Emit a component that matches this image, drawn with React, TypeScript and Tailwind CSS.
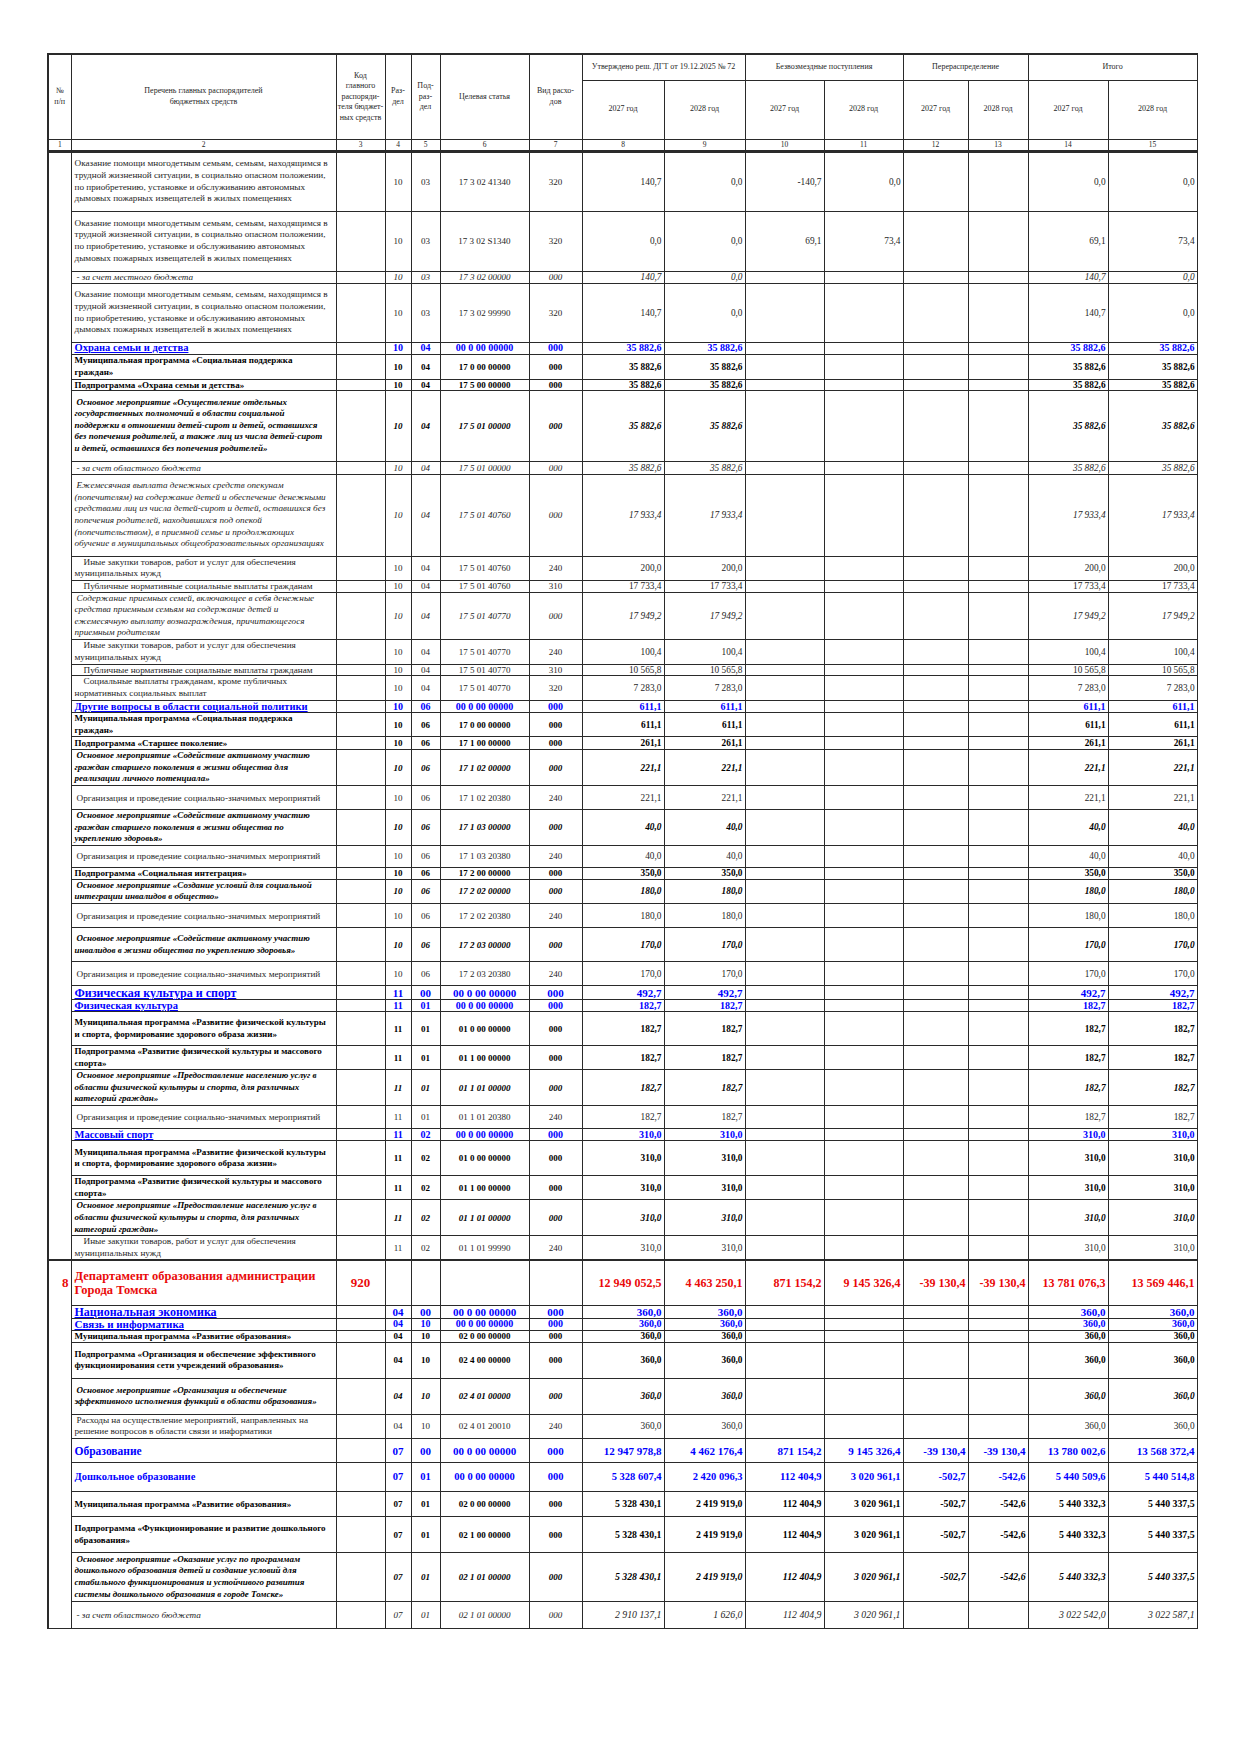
type Kind = "normal" | "sub" | "italic" | "main" | "prog" | "section" | "dept";

interface Row {
  h: string;
  kind: Kind;
  lines: string[];
  codes: string[];
  vals: string[];
  ind?: 0 | 1 | 2;
  u?: boolean;
  ts?: string;
  cs?: string;
  vs?: string;
}

const same = (v: string) => [v, v, "", "", "", "", v, v];
const four = (a: string, b: string, c: string, d: string) => [a, b, "", "", "", "", c, d];

const OKAZ = [
  "Оказание помощи многодетным семьям, семьям, находящимся в",
  "трудной жизненной ситуации, в социально опасном положении,",
  "по приобретению, установке и обслуживанию автономных",
  "дымовых пожарных извещателей в жилых помещениях",
];
const ZAKUPKI = ["Иные закупки товаров, работ и услуг для обеспечения", "муниципальных нужд"];
const PUBL = ["Публичные нормативные социальные выплаты гражданам"];
const ORG = ["Организация и проведение социально-значимых мероприятий"];
const MP_SOC = ["Муниципальная программа «Социальная поддержка", "граждан»"];
const MP_FIZ = ["Муниципальная программа «Развитие физической культуры", "и спорта, формирование здорового образа жизни»"];
const PP_FIZ = ["Подпрограмма «Развитие физической культуры и массового", "спорта»"];
const OM_FIZ = [
  "Основное мероприятие «Предоставление населению услуг в",
  "области физической культуры и спорта, для различных",
  "категорий граждан»",
];
const DEP_MAIN = ["5 328 430,1", "2 419 919,0", "112 404,9", "3 020 961,1", "-502,7", "-542,6", "5 440 332,3", "5 440 337,5"];

// высоты строк сняты с макета
const rows: Row[] = [
  { h: "h-[60px]", kind: "normal", lines: OKAZ, codes: ["10", "03", "17 3 02 41340", "320"], vals: ["140,7", "0,0", "-140,7", "0,0", "", "", "0,0", "0,0"] },
  { h: "h-[60px]", kind: "normal", lines: OKAZ, codes: ["10", "03", "17 3 02 S1340", "320"], vals: ["0,0", "0,0", "69,1", "73,4", "", "", "69,1", "73,4"] },
  { h: "h-[12px]", kind: "sub", lines: ["- за счет местного бюджета"], ind: 1, codes: ["10", "03", "17 3 02 00000", "000"], vals: four("140,7", "0,0", "140,7", "0,0") },
  { h: "h-[59px]", kind: "normal", lines: OKAZ, codes: ["10", "03", "17 3 02 99990", "320"], vals: four("140,7", "0,0", "140,7", "0,0") },
  { h: "h-[12px]", kind: "section", u: true, lines: ["Охрана семьи и детства"], codes: ["10", "04", "00 0 00 00000", "000"], vals: same("35 882,6") },
  { h: "h-[25px]", kind: "prog", lines: MP_SOC, codes: ["10", "04", "17 0 00 00000", "000"], vals: same("35 882,6") },
  { h: "h-[11px]", kind: "prog", lines: ["Подпрограмма «Охрана семьи и детства»"], codes: ["10", "04", "17 5 00 00000", "000"], vals: same("35 882,6") },
  {
    h: "h-[71px]",
    kind: "main",
    ind: 1,
    lines: [
      "Основное мероприятие «Осуществление отдельных",
      "государственных полномочий в области социальной",
      "поддержки в отношении детей-сирот и детей, оставшихся",
      "без попечения родителей, а также лиц из числа детей-сирот",
      "и детей, оставшихся без попечения родителей»",
    ],
    codes: ["10", "04", "17 5 01 00000", "000"],
    vals: same("35 882,6"),
  },
  { h: "h-[13px]", kind: "sub", ind: 1, lines: ["- за счет областного бюджета"], codes: ["10", "04", "17 5 01 00000", "000"], vals: same("35 882,6") },
  {
    h: "h-[82px]",
    kind: "italic",
    ind: 1,
    lines: [
      "Ежемесячная выплата денежных средств опекунам",
      "(попечителям) на содержание детей и обеспечение денежными",
      "средствами лиц из числа детей-сирот и детей, оставшихся без",
      "попечения родителей, находившихся под опекой",
      "(попечительством), в приемной семье и продолжающих",
      "обучение в муниципальных общеобразовательных организациях",
    ],
    codes: ["10", "04", "17 5 01 40760", "000"],
    vals: same("17 933,4"),
  },
  { h: "h-[24px]", kind: "normal", ind: 2, lines: ZAKUPKI, codes: ["10", "04", "17 5 01 40760", "240"], vals: same("200,0") },
  { h: "h-[12px]", kind: "normal", ind: 2, lines: PUBL, codes: ["10", "04", "17 5 01 40760", "310"], vals: same("17 733,4") },
  {
    h: "h-[47px]",
    kind: "italic",
    ind: 1,
    lines: [
      "Содержание приемных семей, включающее в себя денежные",
      "средства приемным семьям на содержание детей и",
      "ежемесячную выплату вознаграждения, причитающегося",
      "приемным родителям",
    ],
    codes: ["10", "04", "17 5 01 40770", "000"],
    vals: same("17 949,2"),
  },
  { h: "h-[25px]", kind: "normal", ind: 2, lines: ZAKUPKI, codes: ["10", "04", "17 5 01 40770", "240"], vals: same("100,4") },
  { h: "h-[11px]", kind: "normal", ind: 2, lines: PUBL, codes: ["10", "04", "17 5 01 40770", "310"], vals: same("10 565,8") },
  { h: "h-[25px]", kind: "normal", ind: 2, lines: ["Социальные выплаты гражданам, кроме публичных", "нормативных социальных выплат"], codes: ["10", "04", "17 5 01 40770", "320"], vals: same("7 283,0") },
  { h: "h-[12px]", kind: "section", u: true, lines: ["Другие вопросы в области социальной политики"], codes: ["10", "06", "00 0 00 00000", "000"], vals: same("611,1") },
  { h: "h-[23px]", kind: "prog", lines: MP_SOC, codes: ["10", "06", "17 0 00 00000", "000"], vals: same("611,1") },
  { h: "h-[13px]", kind: "prog", lines: ["Подпрограмма «Старшее поколение»"], codes: ["10", "06", "17 1 00 00000", "000"], vals: same("261,1") },
  {
    h: "h-[34px]",
    kind: "main",
    ind: 1,
    lines: ["Основное мероприятие «Содействие активному участию", "граждан старшего поколения в жизни общества для", "реализации личного потенциала»"],
    codes: ["10", "06", "17 1 02 00000", "000"],
    vals: same("221,1"),
  },
  { h: "h-[24px]", kind: "normal", ind: 1, lines: ORG, codes: ["10", "06", "17 1 02 20380", "240"], vals: same("221,1") },
  {
    h: "h-[35px]",
    kind: "main",
    ind: 1,
    lines: ["Основное мероприятие «Содействие активному участию", "граждан старшего поколения в жизни общества по", "укреплению здоровья»"],
    codes: ["10", "06", "17 1 03 00000", "000"],
    vals: same("40,0"),
  },
  { h: "h-[22px]", kind: "normal", ind: 1, lines: ORG, codes: ["10", "06", "17 1 03 20380", "240"], vals: same("40,0") },
  { h: "h-[12px]", kind: "prog", lines: ["Подпрограмма «Социальная интеграция»"], codes: ["10", "06", "17 2 00 00000", "000"], vals: same("350,0") },
  {
    h: "h-[24px]",
    kind: "main",
    ind: 1,
    lines: ["Основное мероприятие «Создание условий для социальной", "интеграции инвалидов в общество»"],
    codes: ["10", "06", "17 2 02 00000", "000"],
    vals: same("180,0"),
  },
  { h: "h-[24px]", kind: "normal", ind: 1, lines: ORG, codes: ["10", "06", "17 2 02 20380", "240"], vals: same("180,0") },
  {
    h: "h-[34px]",
    kind: "main",
    ind: 1,
    lines: ["Основное мероприятие «Содействие активному участию", "инвалидов в жизни общества по укреплению здоровья»"],
    codes: ["10", "06", "17 2 03 00000", "000"],
    vals: same("170,0"),
  },
  { h: "h-[24px]", kind: "normal", ind: 1, lines: ORG, codes: ["10", "06", "17 2 03 20380", "240"], vals: same("170,0") },
  { h: "h-[14px]", kind: "section", u: true, ts: "text-[12px]", cs: "text-[11px]", vs: "text-[11px]", lines: ["Физическая культура и спорт"], codes: ["11", "00", "00 0 00 00000", "000"], vals: same("492,7") },
  { h: "h-[12px]", kind: "section", u: true, lines: ["Физическая культура"], codes: ["11", "01", "00 0 00 00000", "000"], vals: same("182,7") },
  { h: "h-[34px]", kind: "prog", lines: MP_FIZ, codes: ["11", "01", "01 0 00 00000", "000"], vals: same("182,7") },
  { h: "h-[24px]", kind: "prog", lines: PP_FIZ, codes: ["11", "01", "01 1 00 00000", "000"], vals: same("182,7") },
  { h: "h-[36px]", kind: "main", ind: 1, lines: OM_FIZ, codes: ["11", "01", "01 1 01 00000", "000"], vals: same("182,7") },
  { h: "h-[23px]", kind: "normal", ind: 1, lines: ORG, codes: ["11", "01", "01 1 01 20380", "240"], vals: same("182,7") },
  { h: "h-[12px]", kind: "section", u: true, lines: ["Массовый спорт"], codes: ["11", "02", "00 0 00 00000", "000"], vals: same("310,0") },
  { h: "h-[35px]", kind: "prog", lines: MP_FIZ, codes: ["11", "02", "01 0 00 00000", "000"], vals: same("310,0") },
  { h: "h-[24px]", kind: "prog", lines: PP_FIZ, codes: ["11", "02", "01 1 00 00000", "000"], vals: same("310,0") },
  { h: "h-[35px]", kind: "main", ind: 1, lines: OM_FIZ, codes: ["11", "02", "01 1 01 00000", "000"], vals: same("310,0") },
  { h: "h-[21px]", kind: "normal", ind: 2, lines: ZAKUPKI, codes: ["11", "02", "01 1 01 99990", "240"], vals: same("310,0") },
  {
    h: "h-[45px]",
    kind: "dept",
    lines: ["Департамент образования администрации", "Города Томска"],
    codes: ["", "", "", ""],
    vals: ["12 949 052,5", "4 463 250,1", "871 154,2", "9 145 326,4", "-39 130,4", "-39 130,4", "13 781 076,3", "13 569 446,1"],
  },
  { h: "h-[13px]", kind: "section", u: true, ts: "text-[12px]", cs: "text-[11px]", vs: "text-[11px]", lines: ["Национальная экономика"], codes: ["04", "00", "00 0 00 00000", "000"], vals: same("360,0") },
  { h: "h-[12px]", kind: "section", u: true, ts: "text-[11px]", lines: ["Связь и информатика"], codes: ["04", "10", "00 0 00 00000", "000"], vals: same("360,0") },
  { h: "h-[12px]", kind: "prog", lines: ["Муниципальная программа «Развитие образования»"], codes: ["04", "10", "02 0 00 00000", "000"], vals: same("360,0") },
  {
    h: "h-[36px]",
    kind: "prog",
    lines: ["Подпрограмма «Организация и обеспечение эффективного", "функционирования сети учреждений образования»"],
    codes: ["04", "10", "02 4 00 00000", "000"],
    vals: same("360,0"),
  },
  {
    h: "h-[36px]",
    kind: "main",
    ind: 1,
    lines: ["Основное мероприятие «Организация и обеспечение", "эффективного исполнения функций в области образования»"],
    codes: ["04", "10", "02 4 01 00000", "000"],
    vals: same("360,0"),
  },
  {
    h: "h-[23px]",
    kind: "normal",
    ind: 1,
    lines: ["Расходы на осуществление мероприятий, направленных на", "решение вопросов в области связи и информатики"],
    codes: ["04", "10", "02 4 01 20010", "240"],
    vals: same("360,0"),
  },
  {
    h: "h-[24px]",
    kind: "section",
    ts: "text-[11.5px]",
    cs: "text-[11px]",
    vs: "text-[11px]",
    lines: ["Образование"],
    codes: ["07", "00", "00 0 00 00000", "000"],
    vals: ["12 947 978,8", "4 462 176,4", "871 154,2", "9 145 326,4", "-39 130,4", "-39 130,4", "13 780 002,6", "13 568 372,4"],
  },
  {
    h: "h-[29px]",
    kind: "section",
    cs: "text-[10.5px]",
    vs: "text-[10.5px]",
    lines: ["Дошкольное образование"],
    codes: ["07", "01", "00 0 00 00000", "000"],
    vals: ["5 328 607,4", "2 420 096,3", "112 404,9", "3 020 961,1", "-502,7", "-542,6", "5 440 509,6", "5 440 514,8"],
  },
  { h: "h-[25px]", kind: "prog", vs: "text-[9.8px]", lines: ["Муниципальная программа «Развитие образования»"], codes: ["07", "01", "02 0 00 00000", "000"], vals: DEP_MAIN },
  {
    h: "h-[36px]",
    kind: "prog",
    vs: "text-[9.8px]",
    lines: ["Подпрограмма «Функционирование и развитие дошкольного", "образования»"],
    codes: ["07", "01", "02 1 00 00000", "000"],
    vals: DEP_MAIN,
  },
  {
    h: "h-[49px]",
    kind: "main",
    ind: 1,
    vs: "text-[9.8px]",
    lines: [
      "Основное мероприятие «Оказание услуг по программам",
      "дошкольного образования детей и создание условий для",
      "стабильного функционирования и устойчивого развития",
      "системы дошкольного образования в городе Томске»",
    ],
    codes: ["07", "01", "02 1 01 00000", "000"],
    vals: DEP_MAIN,
  },
  {
    h: "h-[27px]",
    kind: "sub",
    ind: 1,
    vs: "text-[9.8px]",
    lines: ["- за счет областного бюджета"],
    codes: ["07", "01", "02 1 01 00000", "000"],
    vals: ["2 910 137,1", "1 626,0", "112 404,9", "3 020 961,1", "", "", "3 022 542,0", "3 022 587,1"],
  },
];

const look: Record<Kind, string> = {
  normal: "text-[#262626]",
  sub: "text-[#262626] italic",
  italic: "text-[#262626] italic",
  main: "text-black font-bold italic",
  prog: "text-black font-bold",
  section: "text-[#0000ff] font-bold",
  dept: "text-[#ea0a0a] font-bold",
};

const textSize: Record<Kind, string> = {
  normal: "text-[9.2px]",
  sub: "text-[9.2px]",
  italic: "text-[9.2px]",
  main: "text-[9px]",
  prog: "text-[9px]",
  section: "text-[10.5px]",
  dept: "text-[12.5px]",
};

const indents = ["", "pl-[2px]", "pl-[9px]"];

const cell = "border border-[#2a2a2a] p-0 align-middle";
const head = `${cell} text-center text-[#262626] text-[8px] leading-[10.5px] font-normal`;

const widths = [
  "w-[23px]", "w-[265px]", "w-[49px]", "w-[26px]", "w-[29px]", "w-[89px]", "w-[53px]",
  "w-[82px]", "w-[81px]", "w-[79px]", "w-[79px]", "w-[65px]", "w-[60px]", "w-[80px]", "w-[89px]",
];

const groups = ["Утверждено реш. ДГТ от 19.12.2025 № 72", "Безвозмездные поступления", "Перераспределение", "Итого"];

const Lines = ({ items }: { items: string[] }) => (
  <>
    {items.map((l, i) => (
      <div key={i}>{l}</div>
    ))}
  </>
);

export default function App() {
  return (
    <div className="min-h-[1753px] w-[1240px] bg-white pl-[47px] pt-[53px] font-['Liberation_Serif','Times_New_Roman',serif]">
      <table className="w-[1149px] table-fixed border-collapse">
        <colgroup>
          {widths.map((w, i) => (
            <col key={i} className={w} />
          ))}
        </colgroup>
        <thead>
          <tr className="h-[26px]">
            <th rowSpan={2} className={`${head} border-t-2 border-l-2`}>
              <Lines items={["№", "п/п"]} />
            </th>
            <th rowSpan={2} className={`${head} border-t-2`}>
              <Lines items={["Перечень главных распорядителей", "бюджетных средств"]} />
            </th>
            <th rowSpan={2} className={`${head} border-t-2 whitespace-nowrap`}>
              <Lines items={["Код", "главного", "распоряди-", "теля бюджет-", "ных средств"]} />
            </th>
            <th rowSpan={2} className={`${head} border-t-2`}>
              <Lines items={["Раз-", "дел"]} />
            </th>
            <th rowSpan={2} className={`${head} border-t-2`}>
              <Lines items={["Под-", "раз-", "дел"]} />
            </th>
            <th rowSpan={2} className={`${head} border-t-2`}>
              Целевая статья
            </th>
            <th rowSpan={2} className={`${head} border-t-2`}>
              <Lines items={["Вид расхо-", "дов"]} />
            </th>
            {groups.map((g) => (
              <th key={g} colSpan={2} className={`${head} border-t-2 whitespace-nowrap`}>
                {g}
              </th>
            ))}
          </tr>
          <tr className="h-[59px]">
            {groups.map((g) => (
              <>
                <th key={g + "a"} className={head}>
                  2027 год
                </th>
                <th key={g + "b"} className={head}>
                  2028 год
                </th>
              </>
            ))}
          </tr>
          <tr className="h-[12px]">
            {widths.map((_, i) => (
              <th
                key={i}
                className={`${cell} border-b-[3px] text-center text-[#262626] text-[7.5px] leading-[9px] font-normal ${i === 0 ? "border-l-2" : ""}`}
              >
                {i + 1}
              </th>
            ))}
          </tr>
        </thead>
        <tbody>
          {rows.map((r, idx) => {
            const isDept = r.kind === "dept";
            const top = isDept ? "border-t-2" : "";
            const sz = r.ts ?? textSize[r.kind];
            const lead = isDept ? "leading-[14.5px]" : r.lines.length > 1 ? "leading-[11.6px]" : "leading-[10px]";
            const codeSize = r.cs ?? (r.kind === "section" ? "text-[10px]" : "text-[9px]");
            const valSize = r.vs ?? (r.kind === "section" ? "text-[10px]" : isDept ? "text-[12px]" : "text-[9.3px]");
            return (
              <tr key={idx} className={r.h}>
                {idx === 0 && <td rowSpan={39} className={`${cell} border-l-2`} />}
                {isDept && (
                  <td
                    rowSpan={13}
                    className="border border-[#2a2a2a] border-l-2 border-t-2 p-0 pr-[2px] pt-[14px] align-top text-right text-[13px] leading-[15px] font-bold text-[#ea0a0a]"
                  >
                    8
                  </td>
                )}
                <td className={`${cell} ${top} px-[3px] whitespace-nowrap text-left ${look[r.kind]} ${sz} ${lead}`}>
                  {r.lines.map((l, i) => (
                    <div key={i} className={`${i === 0 ? indents[r.ind ?? 0] : ""} ${r.u ? "underline" : ""}`}>
                      {l}
                    </div>
                  ))}
                </td>
                <td className={`${cell} ${top} text-center leading-[10px] ${isDept ? "text-[13px] font-bold text-[#ea0a0a]" : ""}`}>
                  {isDept ? "920" : ""}
                </td>
                {r.codes.map((c, i) => (
                  <td key={i} className={`${cell} ${top} text-center whitespace-nowrap leading-[10px] ${look[r.kind]} ${codeSize}`}>
                    {c}
                  </td>
                ))}
                {r.vals.map((v, i) => (
                  <td key={i} className={`${cell} ${top} pr-[2px] text-right whitespace-nowrap leading-[10px] ${look[r.kind]} ${valSize}`}>
                    {v}
                  </td>
                ))}
              </tr>
            );
          })}
        </tbody>
      </table>
    </div>
  );
}
